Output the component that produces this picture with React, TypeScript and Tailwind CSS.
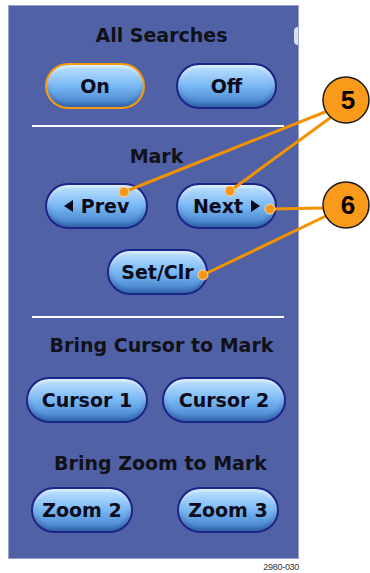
const FONT = "font-['DejaVu_Sans',sans-serif]";

function PillButton({
  children,
  className = "",
  active = false,
}: {
  children: React.ReactNode;
  className?: string;
  active?: boolean;
}) {
  return (
    <div
      className={`flex h-[46px] items-center justify-center rounded-full border-2 bg-linear-to-b from-[#bfe2ff] via-[#79b8f4] to-[#3f7dc6] text-[19px] font-bold text-[#0b0b1c] shadow-[inset_0_-3px_4px_rgba(20,40,110,0.35),inset_0_2px_3px_rgba(255,255,255,0.6)] ${
        active ? "border-[#f59a10]" : "border-[#1b2488]"
      } ${className}`}
    >
      {children}
    </div>
  );
}

function SectionTitle({ children, className = "" }: { children: React.ReactNode; className?: string }) {
  return (
    <div className={`h-[24px] text-center text-[19px] font-bold leading-[24px] text-[#111118] ${className}`}>
      {children}
    </div>
  );
}

function Divider({ className = "" }: { className?: string }) {
  return <div className={`ml-[23px] h-[2px] w-[252px] bg-white ${className}`} />;
}

export default function App() {
  return (
    <div className={`relative h-[573px] w-[370px] overflow-hidden bg-white ${FONT}`}>
      <div className="pl-[8px] pt-[5px]">
        <div className="relative flex h-[554px] w-[291px] flex-col border border-[#9aa2d0] bg-[#5061a5]">
          {/* partial button on the right edge */}
          <div className="absolute right-0 top-[21px] h-[18px] w-[4px] rounded-l-full bg-white/80"></div>

          <SectionTitle className="mt-[17px] pl-[16px]">All Searches</SectionTitle>
          <div className="mt-[16px] flex">
            <PillButton active className="ml-[36px] w-[100px]">On</PillButton>
            <PillButton className="ml-[31px] w-[101px]">Off</PillButton>
          </div>

          <Divider className="mt-[16px]" />

          <SectionTitle className="mt-[17px] pl-[6px]">Mark</SectionTitle>
          <div className="mt-[15px] flex">
            <PillButton className="ml-[36px] w-[103px] gap-[8px]">
              <svg width="9" height="12" viewBox="0 0 9 12">
                <path d="M9 0 L0 6 L9 12 Z" fill="#0b0b1c" />
              </svg>
              <span>Prev</span>
            </PillButton>
            <PillButton className="ml-[28px] w-[101px] gap-[8px]">
              <span>Next</span>
              <svg width="9" height="12" viewBox="0 0 9 12">
                <path d="M0 0 L9 6 L0 12 Z" fill="#0b0b1c" />
              </svg>
            </PillButton>
          </div>
          <div className="mt-[20px] flex">
            <PillButton className="ml-[98px] w-[101px]">Set/Clr</PillButton>
          </div>

          <Divider className="mt-[21px]" />

          <SectionTitle className="mt-[15px] pl-[16px]">Bring Cursor to Mark</SectionTitle>
          <div className="mt-[20px] flex">
            <PillButton className="ml-[17px] w-[122px]">Cursor 1</PillButton>
            <PillButton className="ml-[14px] w-[124px]">Cursor 2</PillButton>
          </div>

          <SectionTitle className="mt-[28px] pl-[14px]">Bring Zoom to Mark</SectionTitle>
          <div className="mt-[12px] flex">
            <PillButton className="ml-[22px] w-[102px]">Zoom 2</PillButton>
            <PillButton className="ml-[44px] w-[102px]">Zoom 3</PillButton>
          </div>
        </div>
        <div className="mt-[3px] w-[291px] text-right font-['Liberation_Sans',sans-serif] text-[9px] leading-[10px] tracking-[-0.3px] text-[#333]">
          2980-030
        </div>
      </div>

      {/* callouts */}
      <svg className="pointer-events-none absolute left-0 top-0" width="370" height="573" viewBox="0 0 370 573">
        <g stroke="#f39200" strokeWidth="3" strokeLinecap="round">
          <line x1="325" y1="112" x2="124" y2="192" />
          <line x1="330" y1="118" x2="230" y2="191" />
          <line x1="324" y1="208" x2="270" y2="209" />
          <line x1="326" y1="216" x2="203" y2="275" />
        </g>
        <g fill="#f7961c" stroke="#ffd89a" strokeWidth="1">
          <circle cx="124" cy="192" r="5" />
          <circle cx="230" cy="191" r="5" />
          <circle cx="270" cy="209" r="5" />
          <circle cx="203" cy="275" r="5" />
        </g>
        <circle cx="346" cy="100" r="23" fill="#f99a1a" stroke="#1a1a1a" strokeWidth="1.5" />
        <circle cx="346" cy="205" r="23" fill="#f99a1a" stroke="#1a1a1a" strokeWidth="1.5" />
        <text x="348" y="109" textAnchor="middle" fontFamily="Liberation Sans, Arial, sans-serif" fontWeight="bold" fontSize="26" fill="#000">
          5
        </text>
        <text x="348" y="214" textAnchor="middle" fontFamily="Liberation Sans, Arial, sans-serif" fontWeight="bold" fontSize="26" fill="#000">
          6
        </text>
      </svg>
    </div>
  );
}
